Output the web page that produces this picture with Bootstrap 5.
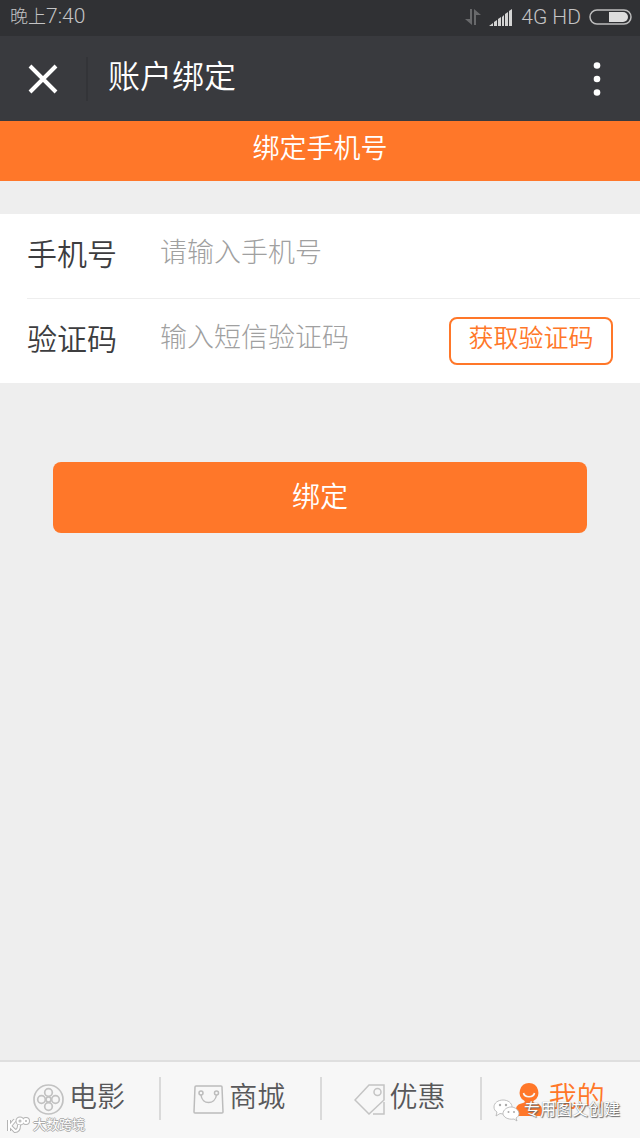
<!DOCTYPE html>
<html lang="zh-CN">
<head>
<meta charset="utf-8">
<meta name="viewport" content="width=device-width, initial-scale=1">
<title>账户绑定</title>
<link href="https://cdn.jsdelivr.net/npm/bootstrap@5.3.0/dist/css/bootstrap.min.css" rel="stylesheet">
<style>
  :root { --brand: #ff7729; --text-weight: 350; }
  body { background: #eee; color: #3d3d3f; font-family: Roboto, "Noto Sans CJK SC", sans-serif; font-weight: var(--text-weight); }
  .status-bar { height: 36px; background: #303134; color: #c4c4c5; font-weight: 300; line-height: 32px; padding: 0 8px 2px 10px; }
  .status-bar .clock-zh { font-size: 18px; }
  .status-bar .network { font-size: 21px; }
  .title-bar { height: 85px; background: #393a3e; padding: 0 26px 0 28px; }
  .title-bar .rule { width: 2px; height: 44px; background: #333438; margin: 0 20px 0 28px; }
  .title-bar h1 { font-size: 32px; line-height: 40px; font-weight: var(--text-weight); padding-bottom: 4px; }
  .bare { background: none; border: 0; padding: 0; line-height: 0; }
  .section-title { height: 60px; background: var(--brand); color: #fff; font-size: 27px; line-height: 56px; font-weight: var(--text-weight); }
  .bind-form { margin-top: 33px; }
  .field-row { height: 85px; margin-left: 27px; padding-right: 27px; }
  .field-row:first-child { height: 84px; }
  .field-row + .field-row { border-top: 1px solid #eee; }
  .field-row label { flex: none; width: 133px; font-size: 30px; line-height: 40px; padding-bottom: 2px; }
  .field-row .form-control { width: 0; min-width: 0; background: none; font-size: 27px; line-height: 40px; font-weight: 300; padding: 0 0 6px; }
  .field-row .form-control::placeholder { color: #a0a0a0; opacity: 1; }
  .btn-code { width: 164px; height: 48px; border: 2px solid var(--brand); border-radius: 8px; color: var(--brand); font-size: 25px; line-height: 40px; font-weight: var(--text-weight); padding: 0 0 4px; }
  .btn-bind { height: 71px; border-radius: 8px; background: var(--brand); color: #fff; font-size: 28px; line-height: 40px; font-weight: var(--text-weight); }
  .btn-bind:hover { background: #f56a1b; color: #fff; }
  .btn-area { padding: 79px 53px; }
  .tab-bar { height: 78px; background: #f7f7f7; border-top: 2px solid #dfdfdf; }
  .tab-bar a { gap: 5px; padding: 0 2px 2px 0; color: #58585a; font-size: 28px; line-height: 40px; text-decoration: none; }
  .tab-bar a + a::before { content: ""; position: absolute; left: -1px; top: 15px; width: 2px; height: 43px; background: #dadada; }
  .tab-bar a.active { color: var(--brand); }
  .tab-bar a span { padding-bottom: 3px; }
  .tab-bar svg { flex: none; }
  .stamp { color: #fff; pointer-events: none; white-space: nowrap; font-weight: 400; }
  .stamp-left { left: 6px; bottom: 3px; gap: 3px; font-size: 13px; line-height: 20px; text-shadow: 1px 0 #aaa, -1px 0 #aaa, 0 1px #aaa, 0 -1px #aaa; }
  .stamp-right { right: 20px; bottom: 16px; gap: 4px; font-size: 16px; line-height: 24px; text-shadow: 1px 1px 1px #666, 0 0 1px #777; }
</style>
</head>
<body>
<div class="d-flex flex-column min-vh-100 position-relative">
  <div class="status-bar d-flex align-items-center justify-content-between">
    <div><span class="clock-zh">晚上</span><span class="network">7:40</span></div>
    <div class="d-flex align-items-center">
      <svg width="16" height="18" viewBox="0 0 16 18" fill="#68696b" aria-hidden="true"><path d="M5 1h2v16L0 11h5zM9 17V1l7 6h-5v10z"/></svg>
      <svg class="ms-2" width="24" height="17" viewBox="0 0 24 17" fill="#d4d4d4" aria-hidden="true"><path d="M0 17l4-3v3zM5 13l3-2v6H5zM9 10l3-2v9H9zM13 8l2-2v11h-2zM16 5l3-2v14h-3zM20 2l3-2v17h-3z"/></svg>
      <span class="network mx-1 px-1">4G HD</span>
      <svg width="43" height="16" viewBox="0 0 43 16" aria-hidden="true"><rect x="1" y="1" width="41" height="14" rx="7" fill="none" stroke="#bdbdbd" stroke-width="1.5"/><path d="M20 3h14a5 5 0 0 1 0 10H20z" fill="#ddd"/></svg>
    </div>
  </div>

  <header class="title-bar d-flex align-items-center">
    <button class="bare" type="button" aria-label="关闭"><svg width="30" height="30" viewBox="0 0 30 30" stroke="#fff" stroke-width="4"><path d="M2 2l26 26M28 2L2 28"/></svg></button>
    <div class="rule"></div>
    <h1 class="m-0 text-white flex-grow-1">账户绑定</h1>
    <button class="bare" type="button" aria-label="更多"><svg width="30" height="34" viewBox="0 0 30 34" fill="#fff"><circle cx="13" cy="3.5" r="3.3"/><circle cx="13" cy="17" r="3.3"/><circle cx="13" cy="30.5" r="3.3"/></svg></button>
  </header>

  <main class="flex-grow-1">
    <h2 class="section-title text-center m-0">绑定手机号</h2>
    <form>
      <div class="bind-form bg-white">
        <div class="field-row d-flex align-items-center">
          <label for="phone">手机号</label>
          <input id="phone" type="tel" class="form-control border-0 shadow-none flex-fill" placeholder="请输入手机号">
        </div>
        <div class="field-row d-flex align-items-center">
          <label for="code">验证码</label>
          <input id="code" type="text" class="form-control border-0 shadow-none flex-fill" placeholder="输入短信验证码">
          <button type="button" class="btn btn-code flex-shrink-0">获取验证码</button>
        </div>
      </div>
      <div class="btn-area">
        <button type="button" class="btn btn-bind w-100">绑定</button>
      </div>
    </form>
  </main>

  <nav class="tab-bar d-flex">
    <a href="#" class="position-relative d-flex flex-fill align-items-center justify-content-center">
      <svg width="31" height="31" viewBox="0 0 31 31" fill="none" stroke="#c2c2c2" stroke-width="1.7" aria-hidden="true"><circle cx="15.5" cy="15.5" r="14.5"/><circle cx="15.5" cy="8.5" r="3.8"/><circle cx="15.5" cy="22.500" r="3.8"/><circle cx="8.5" cy="15.5" r="3.8"/><circle cx="22.5" cy="15.5" r="3.8"/><circle cx="15.5" cy="15.5" r="2.5"/></svg>
      <span>电影</span>
    </a>
    <a href="#" class="position-relative d-flex flex-fill align-items-center justify-content-center">
      <svg width="31" height="31" viewBox="0 0 31 31" fill="none" stroke="#bcbcbc" stroke-width="1.5" aria-hidden="true"><path d="M3 2h25q1 0 1 1l1 25q0 1-1 1H2q-1 0-1-1L2 3q0-1 1-1z"/><circle cx="8" cy="9" r="2"/><circle cx="23.5" cy="9" r="2"/><path d="M8 11c1 10 14 10 15.500 0"/></svg>
      <span>商城</span>
    </a>
    <a href="#" class="position-relative d-flex flex-fill align-items-center justify-content-center">
      <svg width="31" height="31" viewBox="0 0 31 31" fill="none" stroke="#c4c4c4" stroke-width="1.5" aria-hidden="true"><path d="M15 1h15v15L15 30 1 16zM30 18v12H19"/><circle cx="23.5" cy="8" r="3.5"/></svg>
      <span>优惠</span>
    </a>
    <a href="#" class="active position-relative d-flex flex-fill align-items-center justify-content-center" aria-current="page">
      <svg width="30" height="33" viewBox="0 0 30 33" aria-hidden="true"><path d="M15 0a9.500 9.500 0 0 1 5 17.500q-2 1.500 1 2.500c5 1 7 3 7 7v6H2v-6c0-4 2-6 7-7q3-1 1-2.500A9.500 9.500 0 0 1 15 0z" fill="#ff7729"/><path d="M9.500 10c1 5 10 5 11 0" fill="none" stroke="#f7f7f7" stroke-width="1.6"/></svg>
      <span>我的</span>
    </a>
  </nav>

  <div class="stamp stamp-left position-absolute d-flex align-items-center" aria-hidden="true">
    <svg width="24" height="18" viewBox="0 0 24 18" fill="none"><g stroke="#b4b4b4" stroke-width="4"><path d="M3 4v11M9 4l-5 6 5 5q4 0 4-6"/><circle cx="14" cy="5" r="2.5"/><circle cx="20" cy="5" r="2"/></g><g stroke="#fff" stroke-width="2"><path d="M3 4v11M9 4l-5 6 5 5q4 0 4-6"/><circle cx="14" cy="5" r="2.5"/><circle cx="20" cy="5" r="2"/></g></svg>
    <span>大数跨境</span>
  </div>
  <div class="stamp stamp-right position-absolute d-flex align-items-center" aria-hidden="true">
    <svg width="27" height="23" viewBox="0 0 27 23" fill="#fff" stroke="#b0b0b0" stroke-width=".8"><path d="M10 1c5 0 9 3 9 7s-4 7-9 7l-3-.5L3 17l1-4C2 12 1 10 1 8c0-4 4-7 9-7z"/><path d="M18 8c4 0 8 3 8 6.5 0 2-1 3.500-3 4.500l1 3-3-2c-6 1-11-2-11-5.500S14 8 18 8z"/><g fill="#aaa" stroke="none"><circle cx="7" cy="6" r="1.2"/><circle cx="13" cy="6" r="1.2"/><circle cx="15.5" cy="13" r="1"/><circle cx="21" cy="13" r="1"/></g></svg>
    <span>专用图文创建</span>
  </div>
</div>
<script src="https://cdn.jsdelivr.net/npm/bootstrap@5.3.0/dist/js/bootstrap.bundle.min.js"></script>
</body>
</html>
